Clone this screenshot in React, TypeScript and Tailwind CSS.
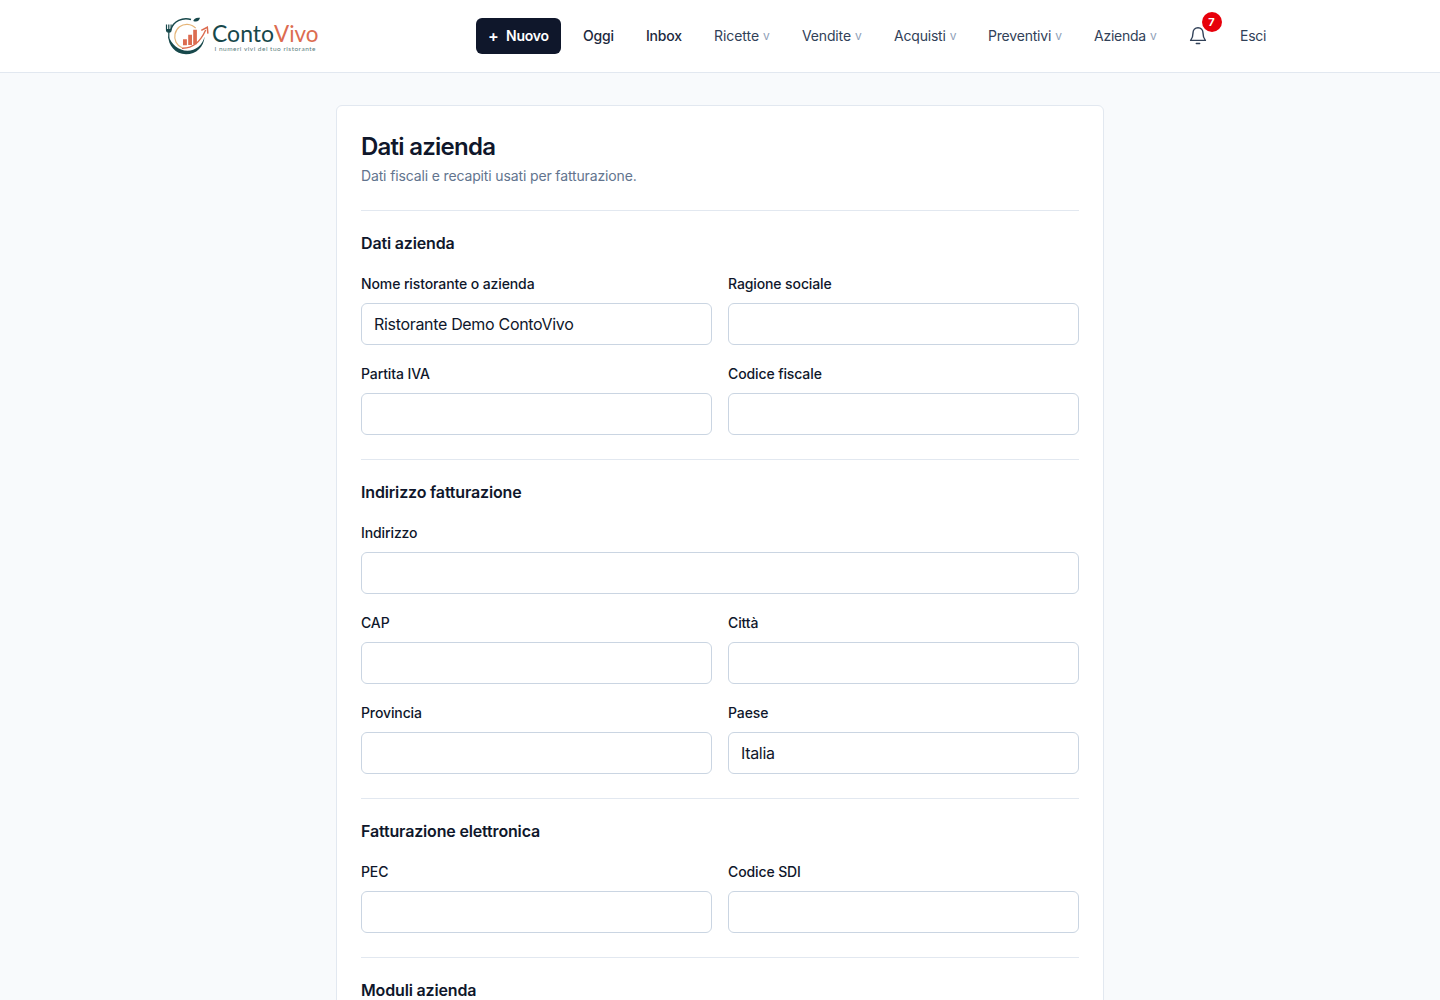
import React from "react";

function Logo() {
  return (
    <svg width="160" height="44" viewBox="0 0 160 44" fill="none" className="block" role="img" aria-label="ContoVivo">
      {/* plate */}
      <path d="M31 5.500C22.500 2.900 13.500 7.200 10.900 15.500" stroke="#17484b" strokeWidth="1.500" />
      <path d="M8.300 21.500C8 31.500 15.500 40.200 26 40.200c10.300 0 18-7.400 18.600-17.800-2.300 8.800-9 14.300-17.100 14.300C18.500 36.700 11.500 30.600 8.300 21.500Z" fill="#17484b" />
      <path d="M22 33.800C16.600 31.600 13.800 26 15 20.200c1.300-6.400 6.600-10.200 12.400-9.900 3.400.2 6.200 1.500 8.300 3.900" stroke="#e6b578" strokeWidth="1.200" />
      {/* fork */}
      <path d="M6.500 10.500v5.200c0 1.500.9 2.400 2.400 2.600M8.800 10.500v14M11.100 10.500v5.200c0 1.500-.8 2.400-2.200 2.600" stroke="#17484b" strokeWidth="1.200" />
      <path d="M6.500 15h4.600c0 2-.7 3-2.300 3.200-1.500-.2-2.300-1.200-2.300-3.200Z" fill="#17484b" />
      {/* leaf */}
      <path d="M33.300 7c.5-2.400 3-3.900 6.700-3.200-.6 3-3.200 4.600-6.700 3.200Z" fill="#17484b" />
      {/* bars and arrow */}
      <path d="M23 25.300h3.900v6H23zM28.200 20.800H32V31h-3.800zM33.200 15.800h3.700v14.400h-3.700z" fill="#dc6c50" />
      <path d="M22 34.200C33 34.600 40.500 27.500 45.700 16" stroke="#dc6c50" strokeWidth="1.400" />
      <path d="M41.300 16.400 47.300 13.300l.6 6.300" stroke="#dc6c50" strokeWidth="1.500" />
      <text x="52" y="27.800" fontFamily="Lato, sans-serif" fontSize="23.500" fill="#17484b" textLength="62" lengthAdjust="spacingAndGlyphs">Conto</text>
      <text x="114" y="27.800" fontFamily="Lato, sans-serif" fontSize="23.500" fill="#dc6c50" textLength="44.500" lengthAdjust="spacingAndGlyphs">Vivo</text>
      <text x="54.500" y="37" fontFamily="Lato, sans-serif" fontSize="6.500" fill="#5c8082" textLength="101" lengthAdjust="spacing">I numeri vivi del tuo ristorante</text>
    </svg>
  );
}

function MenuItem({ label, className }: { label: string; className: string }) {
  return (
    <button className={`flex items-center gap-1 text-sm leading-5 text-slate-700 ${className}`}>
      <span>{label}</span>
      <span className="text-xs leading-4 text-slate-400">v</span>
    </button>
  );
}

function Header() {
  return (
    <header className="h-[73px] border-b border-slate-200 bg-white">
      <div className="mx-auto flex h-[72px] max-w-6xl items-center justify-between px-4">
        <Logo />
        <nav className="flex items-center whitespace-nowrap text-sm">
          <button className="mr-[22px] flex h-9 w-[85px] items-center gap-2 rounded-md bg-slate-900 pl-3 font-semibold text-white">
            <span className="w-[10px] text-center text-base leading-none">+</span>
            <span className="tracking-[-0.2px]">Nuovo</span>
          </button>
          <a className="w-[63px] font-medium tracking-[-0.2px] text-slate-800">Oggi</a>
          <a className="w-[68px] font-medium tracking-[-0.2px] text-slate-800">Inbox</a>
          <MenuItem label="Ricette" className="w-[88px] tracking-[-0.05px]" />
          <MenuItem label="Vendite" className="w-[92px] tracking-[-0.15px]" />
          <MenuItem label="Acquisti" className="w-[94px] tracking-[-0.2px]" />
          <MenuItem label="Preventivi" className="w-[106px] tracking-[-0.2px]" />
          <MenuItem label="Azienda" className="w-[94px] tracking-[-0.25px]" />
          <button className="relative mr-8 text-slate-700" aria-label="Notifiche">
            <svg width="20" height="20" viewBox="0 0 20 20" fill="none" stroke="currentColor" strokeWidth="1.400" strokeLinecap="round" strokeLinejoin="round">
              <path d="M10 1.700c-3 0-5 2.200-5 5.200 0 3.600-.7 5.500-2.400 7.500h14.800C15.700 12.400 15 10.500 15 6.900c0-3-2-5.200-5-5.200ZM8.300 17.500h3.400" />
            </svg>
            <span className="absolute -top-[14px] left-[14px] flex size-5 items-center justify-center rounded-full bg-[#e7000b] pt-px pr-px text-[11px] font-bold leading-none text-white">7</span>
          </button>
          <a className="w-[40px] tracking-[-0.25px] text-slate-700">Esci</a>
        </nav>
      </div>
    </header>
  );
}

function Field({ label, value = "", wide = false }: { label: string; value?: string; wide?: boolean }) {
  return (
    <label className={wide ? "col-span-2 block" : "block"}>
      <span className="block text-sm font-medium tracking-[-0.11px]">{label}</span>
      <input
        defaultValue={value}
        className="mt-[9px] block h-[42px] w-full rounded-md border border-slate-300 bg-white px-3 text-base tracking-[-0.32px] text-slate-900 outline-none"
      />
    </label>
  );
}

function Section({ title, children }: { title: string; children?: React.ReactNode }) {
  return (
    <section className="mt-6 border-t border-slate-200 pt-5">
      <h2 className="text-base font-semibold tracking-[-0.16px]">{title}</h2>
      <div className="mt-[19px] grid grid-cols-2 gap-x-4 gap-y-[19px]">{children}</div>
    </section>
  );
}

export default function App() {
  return (
    <div className="h-[1000px] overflow-hidden bg-slate-50 font-['Inter',sans-serif] text-slate-900">
      <Header />
      <main className="mx-auto mt-8 h-[1100px] max-w-3xl rounded-md border border-slate-200 bg-white p-6">
        <h1 className="pt-px text-2xl leading-[31px] font-semibold tracking-[-0.75px]">Dati azienda</h1>
        <p className="mt-1 text-sm tracking-[-0.14px] text-slate-500">Dati fiscali e recapiti usati per fatturazione.</p>
        <Section title="Dati azienda">
          <Field label="Nome ristorante o azienda" value="Ristorante Demo ContoVivo" />
          <Field label="Ragione sociale" />
          <Field label="Partita IVA" />
          <Field label="Codice fiscale" />
        </Section>
        <Section title="Indirizzo fatturazione">
          <Field label="Indirizzo" wide />
          <Field label="CAP" />
          <Field label="Città" />
          <Field label="Provincia" />
          <Field label="Paese" value="Italia" />
        </Section>
        <Section title="Fatturazione elettronica">
          <Field label="PEC" />
          <Field label="Codice SDI" />
        </Section>
        <Section title="Moduli azienda" />
      </main>
    </div>
  );
}
